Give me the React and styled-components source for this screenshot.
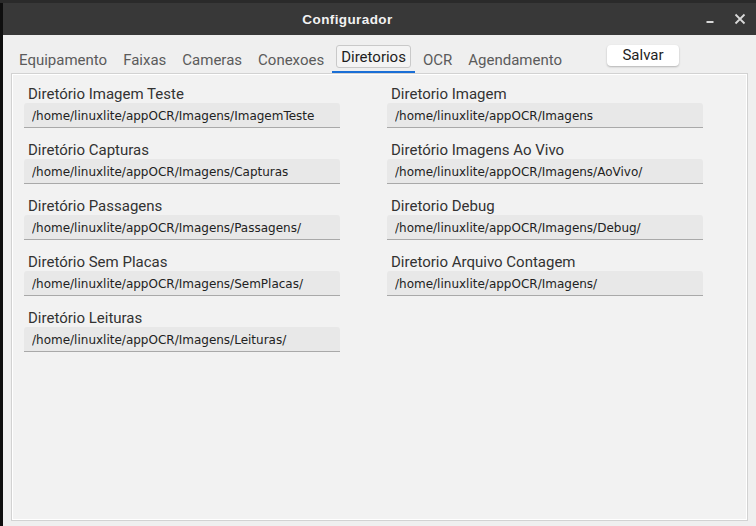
import React, { useState } from "react"
import styled, { createGlobalStyle } from "styled-components"

const GlobalStyle = createGlobalStyle`
  html, body {
    margin: 0;
    padding: 0;
    background: #151515;
  }
  * {
    box-sizing: border-box;
  }
`

const tabs = [
  "Equipamento",
  "Faixas",
  "Cameras",
  "Conexoes",
  "Diretorios",
  "OCR",
  "Agendamento",
]

const leftFields = [
  { label: "Diretório Imagem Teste", value: "/home/linuxlite/appOCR/Imagens/ImagemTeste" },
  { label: "Diretório Capturas", value: "/home/linuxlite/appOCR/Imagens/Capturas" },
  { label: "Diretório Passagens", value: "/home/linuxlite/appOCR/Imagens/Passagens/" },
  { label: "Diretório Sem Placas", value: "/home/linuxlite/appOCR/Imagens/SemPlacas/" },
  { label: "Diretório Leituras", value: "/home/linuxlite/appOCR/Imagens/Leituras/" },
]

const rightFields = [
  { label: "Diretorio Imagem", value: "/home/linuxlite/appOCR/Imagens" },
  { label: "Diretório Imagens Ao Vivo", value: "/home/linuxlite/appOCR/Imagens/AoVivo/" },
  { label: "Diretorio Debug", value: "/home/linuxlite/appOCR/Imagens/Debug/" },
  { label: "Diretorio Arquivo Contagem", value: "/home/linuxlite/appOCR/Imagens/" },
]

const Field = ({ label, value }) => (
  <FieldBox>
    <Label>{label}</Label>
    <Input defaultValue={value} spellCheck={false} />
  </FieldBox>
)

const App = () => {
  const [active, setActive] = useState("Diretorios")

  return (
    <Screen>
      <GlobalStyle />
      <TopStrip />
      <Desk>
        <SideStrip />
        <Window>
          <TitleBar>
            <Title>Configurador</Title>
            <WinButtons>
              <WinButton aria-label="minimizar">
                <svg width="10" height="10" viewBox="0 0 10 10">
                  <rect x="1.5" y="7" width="7" height="2" fill="#d8d8d8" />
                </svg>
              </WinButton>
              <WinButton aria-label="fechar">
                <svg width="12" height="12" viewBox="0 0 12 12">
                  <path d="M1.5 1.5 L10.5 10.5 M10.5 1.5 L1.5 10.5" stroke="#d8d8d8" strokeWidth="1.8" />
                </svg>
              </WinButton>
            </WinButtons>
          </TitleBar>
          <Client>
            <TabBar>
              {tabs.map(t => (
                <Tab key={t} active={t === active} onClick={() => setActive(t)}>
                  <TabText active={t === active}>{t}</TabText>
                </Tab>
              ))}
              <SaveButton>Salvar</SaveButton>
            </TabBar>
            <Pane>
              <Columns>
                <Column>
                  {leftFields.map(f => (
                    <Field key={f.label} {...f} />
                  ))}
                </Column>
                <Column>
                  {rightFields.map(f => (
                    <Field key={f.label} {...f} />
                  ))}
                </Column>
              </Columns>
            </Pane>
          </Client>
        </Window>
      </Desk>
    </Screen>
  )
}

export default App

const Screen = styled.div`
  width: 756px;
  height: 526px;
  display: flex;
  flex-direction: column;
  overflow: hidden;
  background: #151515;
`

const TopStrip = styled.div`
  height: 3px;
  background: #2a2a2a;
`

const Desk = styled.div`
  flex: 1;
  display: flex;
  min-height: 0;
`

const SideStrip = styled.div`
  width: 3px;
  background: #0e0e0e;
`

const Window = styled.div`
  flex: 1;
  display: flex;
  flex-direction: column;
`

const TitleBar = styled.div`
  height: 32px;
  background: #383838;
  display: flex;
  align-items: center;
  justify-content: center;
  position: relative;
`

const Title = styled.div`
  color: #f2f2f2;
  font-family: "Liberation Sans", Arial, sans-serif;
  font-weight: bold;
  font-size: 13.5px;
  letter-spacing: 0.4px;
  margin-left: -64px;
`

const WinButtons = styled.div`
  position: absolute;
  right: 6px;
  top: 0;
  height: 100%;
  display: flex;
  align-items: center;
  gap: 10px;
`

const WinButton = styled.button`
  width: 20px;
  height: 20px;
  padding: 0;
  border: none;
  background: transparent;
  display: flex;
  align-items: center;
  justify-content: center;
`

const Client = styled.div`
  flex: 1;
  background: #efefef;
  display: flex;
  flex-direction: column;
  padding: 9px 8px 5px 8px;
`

const TabBar = styled.div`
  display: flex;
  align-items: flex-end;
  height: 29px;
`

const Tab = styled.div`
  height: 29px;
  padding: 1px 4px 3px 4px;
  display: flex;
  align-items: stretch;
  border-bottom: 2px solid ${({ active }) => (active ? "#1a6fd6" : "transparent")};
  cursor: pointer;
`

const TabText = styled.div`
  display: flex;
  align-items: center;
  padding: 0 ${({ active }) => (active ? "4px" : "3px")};
  border: 1px solid ${({ active }) => (active ? "#c9c9c9" : "transparent")};
  border-radius: 3px;
  background: ${({ active }) => (active ? "#f4f4f4" : "transparent")};
  font-family: Roboto, "Noto Sans", sans-serif;
  font-size: 15px;
  color: ${({ active }) => (active ? "#1e1e1e" : "#5b5b5b")};
  padding-top: ${({ active }) => (active ? "0" : "6px")};
`

const SaveButton = styled.button`
  align-self: flex-start;
  margin-left: 37px;
  margin-top: 1px;
  width: 72px;
  height: 21px;
  border: none;
  border-radius: 4px;
  background: #ffffff;
  box-shadow: 0 1px 2px rgba(0, 0, 0, 0.25);
  font-family: Roboto, "Noto Sans", sans-serif;
  font-size: 15px;
  color: #1e1e1e;
  padding: 0 0 2px 0;
`

const Pane = styled.div`
  flex: 1;
  border: 1px solid #d2d2d2;
  box-shadow: inset 0 0 0 1px #ffffff;
  background: #f2f2f2;
  padding: 10px 12px;
`

const Columns = styled.div`
  display: grid;
  grid-template-columns: 316px 316px;
  column-gap: 47px;
`

const Column = styled.div`
  display: flex;
  flex-direction: column;
  gap: 12px;
`

const FieldBox = styled.div`
  display: flex;
  flex-direction: column;
`

const Label = styled.div`
  height: 19px;
  line-height: 21px;
  padding-left: 4px;
  font-family: Roboto, "Noto Sans", sans-serif;
  font-size: 15px;
  color: #333333;
`

const Input = styled.input`
  height: 25px;
  width: 100%;
  border: none;
  border-bottom: 1px solid #a9a9a9;
  border-radius: 3px 3px 0 0;
  background: #e8e8e8;
  padding: 2px 8px 0 8px;
  font-family: "DejaVu Sans", Verdana, sans-serif;
  font-size: 12px;
  color: #222222;
  outline: none;
`
